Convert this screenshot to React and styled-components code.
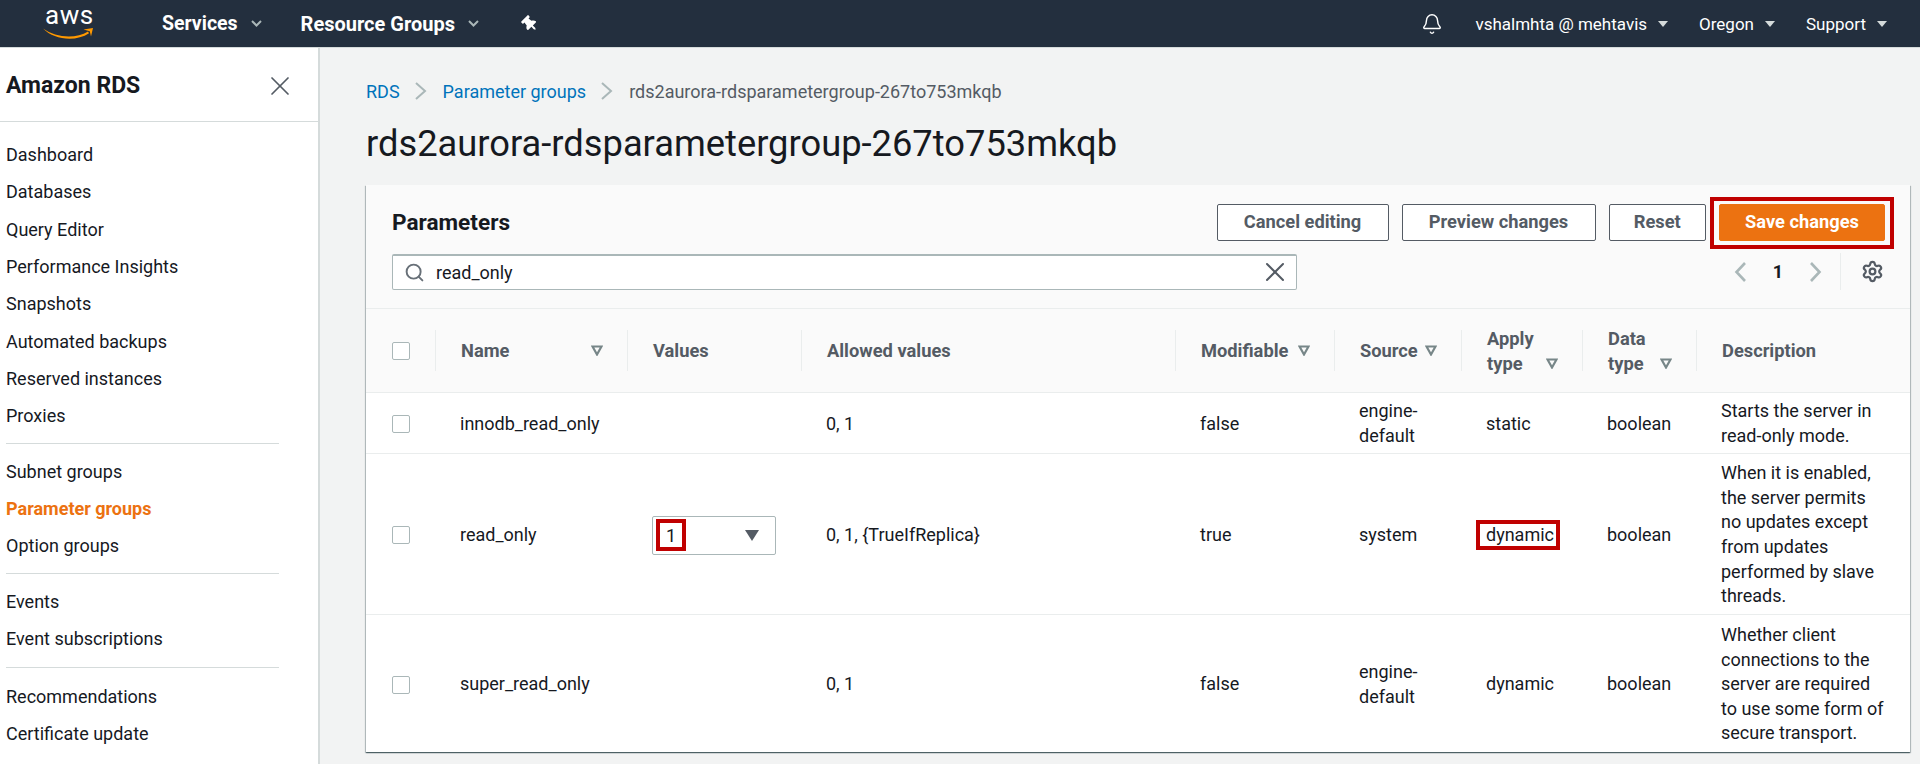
import React from 'react';
import styled, { createGlobalStyle } from 'styled-components';
import { Bell, Search, X, Settings } from 'lucide-react';
import { FaThumbtack } from 'react-icons/fa';

const GlobalStyle = createGlobalStyle`
  html, body { margin: 0; padding: 0; height: 100%; overflow: hidden; }
  body { font-family: Roboto, "Liberation Sans", sans-serif; font-size: 18px; color: #16191f; background: #f2f3f3; }
  * { box-sizing: border-box; }
`;

const Page = styled.div`
  width: 1920px;
  height: 764px;
  display: flex;
  flex-direction: column;
  overflow: hidden;
`;

const TopBar = styled.header`
  height: 48px;
  flex: none;
  display: flex;
  align-items: center;
  background: #232f3e;
  border-bottom: 1px solid #d5dbdb;
  color: #fff;
  padding: 0 33px 0 43px;
`;

const Logo = styled.div`
  width: 51px;
  height: 47px;
  margin-right: 68px;
  display: flex;
  flex-direction: column;
`;

const LogoText = styled.span`
  display: block;
  padding-left: 2px;
  font-size: 26px;
  letter-spacing: 0.5px;
  line-height: 30px;
`;

const Smile = styled.svg`
  display: block;
  margin-top: -3px;
`;

const TopMenu = styled.div`
  display: flex;
  align-items: center;
  font-weight: 700;
  font-size: ${p => p.$size}px;
  margin-left: ${p => p.$gap}px;
`;

const TopCaret = styled.svg`
  width: 11px;
  height: 7px;
  margin-left: 13px;
  fill: none;
  stroke: #aab7b8;
  stroke-width: 2;
`;

const Pin = styled(FaThumbtack)`
  width: 16px;
  height: 16px;
  margin-left: 43px;
  transform: rotate(-45deg);
`;

const RightGroup = styled.div`
  margin-left: auto;
  display: flex;
  align-items: center;
`;

const UserMenu = styled.div`
  display: flex;
  align-items: center;
  font-size: 17px;
  margin-left: ${p => p.$gap}px;
`;

const SolidCaret = styled.span`
  width: 0;
  height: 0;
  margin-left: 11px;
  border-left: 5px solid transparent;
  border-right: 5px solid transparent;
  border-top: 6px solid #d5dbdb;
`;

const Body = styled.div`
  flex: 1;
  display: flex;
  min-height: 0;
`;

const Sidebar = styled.aside`
  width: 320px;
  flex: none;
  background: #fff;
  border-right: 2px solid #d5dbdb;
`;

const SideHead = styled.div`
  height: 74px;
  display: flex;
  align-items: center;
  justify-content: space-between;
  padding: 2px 22px 0 6px;
  border-bottom: 1px solid #d5dbdb;
  font-size: 23px;
  font-weight: 700;
`;

const Nav = styled.nav`
  padding: 14px 0 0 6px;
`;

const NavItem = styled.div`
  height: 37.33px;
  display: flex;
  align-items: center;
  color: ${p => (p.$active ? '#ec7211' : '#16191f')};
  font-weight: ${p => (p.$active ? 700 : 400)};
`;

const NavDivider = styled.div`
  width: 273px;
  margin: ${p => p.$space}px 0;
  border-top: 1px solid #d5dbdb;
`;

const Main = styled.main`
  flex: 1;
  padding: 31px 10px 0 46px;
`;

const Crumbs = styled.div`
  height: 24px;
  display: flex;
  align-items: center;
  color: #545b64;
`;

const CrumbLink = styled.span`
  color: #0073bb;
`;

const CrumbSep = styled.svg`
  width: 13px;
  height: 20px;
  margin: 0 16px 0 14px;
  fill: none;
  stroke: #aab7b8;
  stroke-width: 2;
`;

const Title = styled.h1`
  margin: 16px 0;
  height: 50px;
  line-height: 50px;
  font-size: 36.3px;
  font-weight: 400;
`;

const Panel = styled.section`
  width: 1544px;
  background: #fff;
  box-shadow: 0 1px 1px 0 rgba(0, 28, 36, 0.5), 1px 1px 1px 0 rgba(0, 28, 36, 0.2), -1px 1px 1px 0 rgba(0, 28, 36, 0.2);
`;

const PanelHead = styled.div`
  height: 124px;
  background: #fafafa;
  border-bottom: 1px solid #eaeded;
  padding-top: 19px;
`;

const HeadRow = styled.div`
  display: flex;
  align-items: center;
  padding: 0 16px 0 26px;
`;

const PanelTitle = styled.h2`
  margin: 0;
  font-size: 22.6px;
  font-weight: 700;
`;

const Actions = styled.div`
  margin-left: auto;
  display: flex;
  align-items: center;
  gap: 13px;
`;

const Button = styled.button`
  height: 37px;
  width: ${p => p.$width}px;
  padding: 0 0 2px;
  border: 1px solid ${p => (p.$primary ? '#ec7211' : '#545b64')};
  border-radius: 2px;
  background: ${p => (p.$primary ? '#ec7211' : '#fff')};
  color: ${p => (p.$primary ? '#fff' : '#545b64')};
  font-family: inherit;
  font-size: 18.3px;
  font-weight: 700;
`;

const SaveOutline = styled.div`
  display: flex;
  border: 4px solid #c00000;
  padding: 3.5px 5px;
  margin: -8px 0 -8px -9px;
`;

const FilterRow = styled(HeadRow)`
  margin-top: 12px;
  padding-right: 26px;
`;

const SearchBox = styled.div`
  width: 905px;
  height: 36px;
  display: flex;
  align-items: center;
  background: #fff;
  border: 1px solid #aab7b8;
  border-top-width: 2px;
  border-radius: 2px;
  padding: 0 5px 0 11px;
  color: #16191f;
`;

const SearchText = styled.span`
  margin-left: 11px;
  flex: 1;
`;

const Pager = styled.div`
  margin-left: auto;
  display: flex;
  align-items: center;
  height: 37px;
`;

const PagerChevron = styled.svg`
  width: 13px;
  height: 22px;
  fill: none;
  stroke: #aab7b8;
  stroke-width: 2.6;
`;

const PageNo = styled.span`
  width: 62px;
  text-align: center;
  font-weight: 700;
`;

const PagerDivider = styled.div`
  width: 1px;
  height: 37px;
  background: #eaeded;
  margin: 0 20px 0 18px;
`;

const columns = '69px 192px 174px 374px 159px 127px 121px 114px 1fr';

const TableHead = styled.div`
  height: 84px;
  display: grid;
  grid-template-columns: ${columns};
  align-items: center;
  background: #fafafa;
  border-bottom: 1px solid #eaeded;
`;

const CheckCell = styled.div`
  padding-left: 26px;
  display: flex;
`;

const Checkbox = styled.span`
  width: 18px;
  height: 18px;
  background: #fff;
  border: 1px solid #aab7b8;
  border-radius: 2px;
`;

const HeadCell = styled.div`
  height: 41px;
  display: flex;
  align-items: center;
  justify-content: space-between;
  padding: 0 24px 0 25px;
  border-left: 1px solid #eaeded;
  color: #545b64;
  font-size: 18.3px;
  font-weight: 700;
  line-height: 25px;
`;

const SortIcon = styled.svg`
  width: 12px;
  height: 11px;
  flex: none;
  align-self: ${p => (p.$low ? 'flex-end' : 'center')};
  margin-bottom: ${p => (p.$low ? 2 : 0)}px;
  fill: none;
  stroke: #778688;
  stroke-width: 2.2;
`;

const Row = styled.div`
  height: ${p => p.$height}px;
  padding-top: 2px;
  display: grid;
  grid-template-columns: ${columns};
  align-items: center;
  border-bottom: ${p => (p.$last ? 'none' : '1px solid #eaeded')};
`;

const Cell = styled.div`
  padding: 0 ${p => (p.$desc ? 24 : 10)}px 0 25px;
  line-height: 24.6px;
`;

const SelectBox = styled.div`
  width: 124px;
  height: 39px;
  margin-left: 25px;
  display: flex;
  align-items: center;
  justify-content: space-between;
  background: #fff;
  border: 1px solid #aab7b8;
  border-radius: 2px;
  padding: 0 16px 0 3px;
`;

const ValueMark = styled.span`
  width: 30px;
  height: 32px;
  display: flex;
  align-items: center;
  justify-content: center;
  border: 4px solid #c00000;
`;

const SelectCaret = styled.span`
  width: 0;
  height: 0;
  border-left: 7px solid transparent;
  border-right: 7px solid transparent;
  border-top: 11px solid #545b64;
`;

const TextMark = styled.span`
  display: inline-flex;
  align-items: center;
  height: 30px;
  margin-left: -10px;
  padding: 0 2px 0 6px;
  border: 4px solid #c00000;
`;

const NAV_GROUPS = [
  ['Dashboard', 'Databases', 'Query Editor', 'Performance Insights', 'Snapshots', 'Automated backups', 'Reserved instances', 'Proxies'],
  ['Subnet groups', 'Parameter groups', 'Option groups'],
  ['Events', 'Event subscriptions'],
  ['Recommendations', 'Certificate update'],
];

const Sort = ({ low }) => (
  <SortIcon $low={low} viewBox="0 0 12 11">
    <path d="M1.5 1.5h9L6 9.5z" />
  </SortIcon>
);

const App = () => (
  <Page>
    <GlobalStyle />
    <TopBar>
      <Logo>
        <LogoText>aws</LogoText>
        <Smile width="51" height="20" viewBox="0 0 51 20">
          <path d="M0 1.5C13 11 33 12 45 4.5L46 6.2C33 15 11 13 0 1.5z" fill="#f90" />
          <path d="M40.5 2.5L50 1L48 9.5L46.8 4.2z" fill="#f90" />
        </Smile>
      </Logo>
      <TopMenu $gap={0} $size={19.5}>
        Services
        <TopCaret viewBox="0 0 11 7"><path d="M1 1l4.5 4.5L10 1" /></TopCaret>
      </TopMenu>
      <TopMenu $gap={39} $size={20}>
        Resource Groups
        <TopCaret viewBox="0 0 11 7"><path d="M1 1l4.5 4.5L10 1" /></TopCaret>
      </TopMenu>
      <Pin />
      <RightGroup>
        <Bell size={22} strokeWidth={1.6} />
        <UserMenu $gap={32}>vshalmhta @ mehtavis<SolidCaret /></UserMenu>
        <UserMenu $gap={31}>Oregon<SolidCaret /></UserMenu>
        <UserMenu $gap={31}>Support<SolidCaret /></UserMenu>
      </RightGroup>
    </TopBar>
    <Body>
      <Sidebar>
        <SideHead>
          Amazon RDS
          <X size={32} strokeWidth={1.3} color="#545b64" />
        </SideHead>
        <Nav>
          {NAV_GROUPS.map((group, i) => (
            <React.Fragment key={group[0]}>
              {i > 0 && <NavDivider $space={i === 3 ? 9.7 : 8.5} />}
              {group.map(item => (
                <NavItem key={item} $active={item === 'Parameter groups'}>{item}</NavItem>
              ))}
            </React.Fragment>
          ))}
        </Nav>
      </Sidebar>
      <Main>
        <Crumbs>
          <CrumbLink>RDS</CrumbLink>
          <CrumbSep viewBox="0 0 13 20"><path d="M2 2l9 8-9 8" /></CrumbSep>
          <CrumbLink>Parameter groups</CrumbLink>
          <CrumbSep viewBox="0 0 13 20"><path d="M2 2l9 8-9 8" /></CrumbSep>
          rds2aurora-rdsparametergroup-267to753mkqb
        </Crumbs>
        <Title>rds2aurora-rdsparametergroup-267to753mkqb</Title>
        <Panel>
          <PanelHead>
            <HeadRow>
              <PanelTitle>Parameters</PanelTitle>
              <Actions>
                <Button $width={172}>Cancel editing</Button>
                <Button $width={194}>Preview changes</Button>
                <Button $width={97.5}>Reset</Button>
                <SaveOutline>
                  <Button $primary $width={166}>Save changes</Button>
                </SaveOutline>
              </Actions>
            </HeadRow>
            <FilterRow>
              <SearchBox>
                <Search size={21} color="#687078" strokeWidth={2.2} />
                <SearchText>read_only</SearchText>
                <X size={32} color="#545b64" strokeWidth={1.5} />
              </SearchBox>
              <Pager>
                <PagerChevron viewBox="0 0 13 22"><path d="M11 2L2.5 11l8.5 9" /></PagerChevron>
                <PageNo>1</PageNo>
                <PagerChevron viewBox="0 0 13 22"><path d="M2 2l8.5 9L2 20" /></PagerChevron>
                <PagerDivider />
                <Settings size={23} color="#545b64" strokeWidth={2.3} />
              </Pager>
            </FilterRow>
          </PanelHead>
          <TableHead>
            <CheckCell><Checkbox /></CheckCell>
            <HeadCell>Name<Sort /></HeadCell>
            <HeadCell>Values</HeadCell>
            <HeadCell>Allowed values</HeadCell>
            <HeadCell>Modifiable<Sort /></HeadCell>
            <HeadCell>Source<Sort /></HeadCell>
            <HeadCell><span>Apply type</span><Sort low /></HeadCell>
            <HeadCell><span>Data type</span><Sort low /></HeadCell>
            <HeadCell>Description</HeadCell>
          </TableHead>
          <Row $height={61}>
            <CheckCell><Checkbox /></CheckCell>
            <Cell>innodb_read_only</Cell>
            <Cell />
            <Cell>0, 1</Cell>
            <Cell>false</Cell>
            <Cell>engine-default</Cell>
            <Cell>static</Cell>
            <Cell>boolean</Cell>
            <Cell $desc>Starts the server in read-only mode.</Cell>
          </Row>
          <Row $height={161}>
            <CheckCell><Checkbox /></CheckCell>
            <Cell>read_only</Cell>
            <SelectBox>
              <ValueMark>1</ValueMark>
              <SelectCaret />
            </SelectBox>
            <Cell>0, 1, {'{TrueIfReplica}'}</Cell>
            <Cell>true</Cell>
            <Cell>system</Cell>
            <Cell><TextMark>dynamic</TextMark></Cell>
            <Cell>boolean</Cell>
            <Cell $desc>When it is enabled, the server permits no updates except from updates performed by slave threads.</Cell>
          </Row>
          <Row $height={137} $last>
            <CheckCell><Checkbox /></CheckCell>
            <Cell>super_read_only</Cell>
            <Cell />
            <Cell>0, 1</Cell>
            <Cell>false</Cell>
            <Cell>engine-default</Cell>
            <Cell>dynamic</Cell>
            <Cell>boolean</Cell>
            <Cell $desc>Whether client connections to the server are required to use some form of secure transport.</Cell>
          </Row>
        </Panel>
      </Main>
    </Body>
  </Page>
);

export default App;
